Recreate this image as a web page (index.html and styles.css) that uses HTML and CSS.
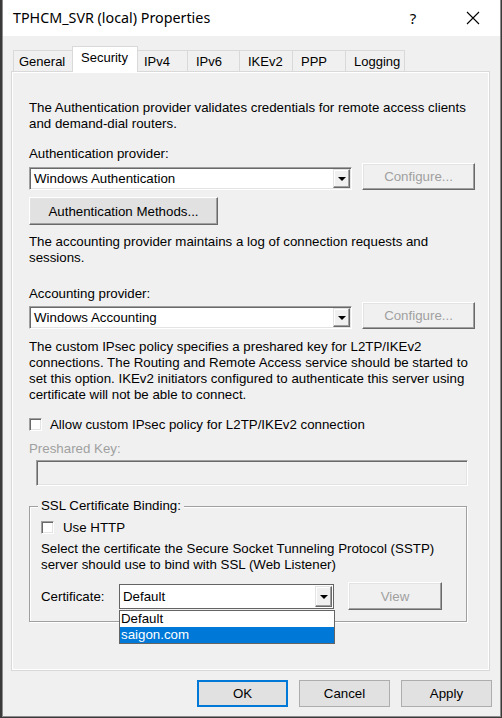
FILE: index.html
```html
<!DOCTYPE html>
<html>
<head>
<meta charset="utf-8">
<link rel="stylesheet" href="styles.css">
</head>
<body>
<div class="window">
  <div class="titlebar">
    <span class="title">TPHCM_SVR (local) Properties</span>
    <span class="help">?</span>
    <span class="close"><svg width="14" height="14" viewBox="0 0 14 14"><path d="M1 1L13 13M13 1L1 13" stroke="#000" stroke-width="1.1" fill="none"/></svg></span>
  </div>
  <div class="client">
    <div class="tabs">
      <div class="tab t-general">General</div>
      <div class="tab active">Security</div>
      <div class="tab t-ipv4">IPv4</div>
      <div class="tab t-ipv6">IPv6</div>
      <div class="tab t-ikev2">IKEv2</div>
      <div class="tab t-ppp">PPP</div>
      <div class="tab t-logging">Logging</div>
    </div>
    <div class="panel">
      <p class="txt first-txt">The Authentication provider validates credentials for remote access clients<br>and demand-dial routers.</p>
      <div class="label lbl-auth">Authentication provider:</div>
      <div class="row row-auth">
        <div class="combo wide"><span class="val">Windows Authentication</span><span class="arrow"><i></i></span></div>
        <div class="btn disabled cfg">Configure...</div>
      </div>
      <div class="btn methods">Authentication Methods...</div>
      <p class="txt acc-txt">The accounting provider maintains a log of connection requests and<br>sessions.</p>
      <div class="label lbl-acc">Accounting provider:</div>
      <div class="row row-acc">
        <div class="combo wide"><span class="val">Windows Accounting</span><span class="arrow"><i></i></span></div>
        <div class="btn disabled cfg">Configure...</div>
      </div>
      <p class="txt ipsec-txt">The custom IPsec policy specifies a preshared key for L2TP/IKEv2<br>connections. The Routing and Remote Access service should be started to<br>set this option. IKEv2 initiators configured to authenticate this server using<br>certificate will not be able to connect.</p>
      <div class="check-row ipsec-check"><span class="chk"></span><span>Allow custom IPsec policy for L2TP/IKEv2 connection</span></div>
      <div class="label grey lbl-psk">Preshared Key:</div>
      <div class="textbox"></div>
      <div class="group">
        <div class="legend">SSL Certificate Binding:</div>
        <div class="check-row http-check"><span class="chk"></span><span>Use HTTP</span></div>
        <p class="txt sstp-txt">Select the certificate the Secure Socket Tunneling Protocol (SSTP)<br>server should use to bind with SSL (Web Listener)</p>
        <div class="cert-row">
          <span class="cert-label">Certificate:</span>
          <div class="combo cert"><span class="val">Default</span><span class="arrow"><i></i></span>
            <div class="droplist">
              <div class="opt">Default</div>
              <div class="opt sel">saigon.com</div>
            </div>
          </div>
          <div class="btn disabled view">View</div>
        </div>
      </div>
    </div>
    <div class="footer">
      <div class="fbtn ok">OK</div>
      <div class="fbtn">Cancel</div>
      <div class="fbtn">Apply</div>
    </div>
  </div>
</div>
</body>
</html>
```
FILE: styles.css
```css
html, body {
  margin: 0;
  padding: 0;
  background: #3a3a3a;
}
body {
  width: 502px;
  height: 718px;
  overflow: hidden;
  font-family: "Liberation Sans", Arial, sans-serif;
  font-size: 13.3px;
  color: #000;
}
.window {
  margin-left: 2px;
  width: 497px;
  height: 716px;
  border: 1px solid #8c8c8c;
  border-top: none;
  background: #f0f0f0;
  display: flex;
  flex-direction: column;
}
.titlebar {
  height: 36px;
  background: #fff;
  display: flex;
  align-items: center;
  font-family: "Noto Sans", "Open Sans", sans-serif;
  font-size: 14.3px;
}
.title {
  padding-left: 10px;
  flex: 1;
  padding-bottom: 1px;
}
.help {
  width: 20px;
  text-align: center;
  margin-right: 43px;
  font-size: 15px;
}
.close {
  width: 14px;
  margin-right: 20px;
  display: flex;
}
.client {
  flex: 1;
  display: flex;
  flex-direction: column;
  padding: 10px 10px 0 8px;
}
.tabs {
  display: flex;
  align-items: flex-end;
  height: 26px;
  padding-left: 2px;
}
.tab {
  box-sizing: border-box;
  height: 22px;
  line-height: 21px;
  padding-left: 6px;
  border: 1px solid #d9d9d9;
  border-bottom: none;
  margin-left: -1px;
  background: #f0f0f0;
  font-size: 13px;
  white-space: nowrap;
}
.t-general { margin-left: 0; width: 60px; padding-left: 5px; }
.t-ipv4 { width: 51px; }
.t-ipv6 { width: 53px; padding-left: 8px; }
.t-ikev2 { width: 54px; padding-left: 8px; }
.t-ppp { width: 54px; padding-left: 8px; }
.t-logging { width: 60px; padding-left: 8px; }
.tab.active {
  height: 26px;
  line-height: 22px;
  width: 66px;
  background: #fff;
  padding-left: 8px;
  position: relative;
  z-index: 1;
}
.panel {
  height: 600px;
  box-sizing: border-box;
  border: 1px solid #d9d9d9;
  box-shadow: inset 1px 1px #fff, inset -1px -1px #fff;
  background: #f0f0f0;
  padding: 0 0 0 17px;
  margin-top: -1px;
}
.txt {
  margin: 0;
  line-height: 16px;
}
.first-txt { margin-top: 28px; }
.label { line-height: 16px; }
.label.grey { color: #a0a0a0; }
.lbl-auth { margin-top: 14px; }
.row {
  display: flex;
  align-items: flex-end;
  gap: 10px;
}
.row-auth { margin-top: 1px; }
.row-acc { margin-top: 0; }
.combo {
  height: 23px;
  box-sizing: border-box;
  background: #fff;
  border: 1px solid;
  border-color: #a0a0a0 #fff #fff #a0a0a0;
  box-shadow: inset 1px 1px #696969, inset -1px -1px #e3e3e3;
  display: flex;
  align-items: center;
  position: relative;
}
.combo.wide { width: 323px; }
.combo .val {
  flex: 1;
  padding-left: 4px;
}
.arrow {
  width: 17px;
  height: 19px;
  margin-right: 1px;
  box-sizing: border-box;
  background: #f0f0f0;
  border: 1px solid;
  border-color: #e3e3e3 #696969 #696969 #e3e3e3;
  box-shadow: inset -1px -1px #a0a0a0, inset 1px 1px #fff;
  display: flex;
  align-items: center;
  justify-content: center;
}
.arrow i {
  width: 0;
  height: 0;
  border-left: 4px solid transparent;
  border-right: 4px solid transparent;
  border-top: 4px solid #000;
  margin-top: 1px;
}
.btn {
  box-sizing: border-box;
  height: 27px;
  background: #e1e1e1;
  border: 1px solid;
  border-color: #fff #696969 #696969 #fff;
  box-shadow: inset -1px -1px #a0a0a0, inset 1px 1px #e3e3e3;
  display: flex;
  align-items: center;
  justify-content: center;
}
.btn.disabled { color: #a0a0a0; background: #f0f0f0; }
.btn.cfg { width: 113px; }
.methods {
  width: 189px;
  height: 28px;
  margin-top: 7px;
}
.acc-txt { margin-top: 9px; }
.lbl-acc { margin-top: 20px; }
.ipsec-txt { margin-top: 10px; }
.check-row {
  display: flex;
  align-items: center;
  height: 16px;
}
.chk {
  width: 13px;
  height: 13px;
  box-sizing: border-box;
  background: #fff;
  border: 1px solid;
  border-color: #a0a0a0 #fff #fff #a0a0a0;
  box-shadow: inset 1px 1px #696969, inset -1px -1px #e3e3e3;
  margin-right: 8px;
}
.ipsec-check { margin-top: 13px; }
.lbl-psk { margin-top: 9px; }
.textbox {
  width: 432px;
  height: 26px;
  box-sizing: border-box;
  margin: 3px 0 0 7px;
  border: 1px solid;
  border-color: #a0a0a0 #fff #fff #a0a0a0;
  box-shadow: inset 1px 1px #696969, inset -1px -1px #e3e3e3;
  background: #f0f0f0;
}
.group {
  width: 438px;
  height: 116px;
  box-sizing: border-box;
  margin-top: 20px;
  border: 1px solid #a0a0a0;
  box-shadow: 1px 1px #fff, inset 1px 1px #fff;
  position: relative;
  padding: 12px 0 0 11px;
}
.legend {
  position: absolute;
  top: -9px;
  left: 8px;
  padding: 0 3px;
  background: #f0f0f0;
  line-height: 16px;
}
.http-check .chk { margin-right: 9px; }
.sstp-txt { margin-top: 6px; }
.cert-row {
  display: flex;
  align-items: center;
  margin-top: 9px;
}
.cert-label { width: 78px; }
.combo.cert {
  width: 215px;
  height: 25px;
  border: 1px solid #646464;
  box-shadow: none;
}
.combo.cert .val { padding-left: 3px; }
.combo.cert .arrow { height: 21px; }
.btn.view {
  width: 94px;
  height: 28px;
  margin-left: 14px;
}
.droplist {
  position: absolute;
  left: -1px;
  top: 25px;
  width: 216px;
  box-sizing: border-box;
  border: 1px solid #646464;
  background: #fff;
  z-index: 5;
}
.opt {
  height: 16px;
  line-height: 16px;
  padding-left: 1px;
}
.opt.sel {
  background: #0078d7;
  color: #fff;
}
.footer {
  display: flex;
  justify-content: flex-end;
  gap: 11px;
  margin-top: 9px;
  margin-right: -2px;
}
.fbtn {
  width: 91px;
  height: 27px;
  box-sizing: border-box;
  background: #e1e1e1;
  border: 1px solid #adadad;
  display: flex;
  align-items: center;
  justify-content: center;
}
.fbtn.ok {
  border: 2px solid #0078d7;
}
```
